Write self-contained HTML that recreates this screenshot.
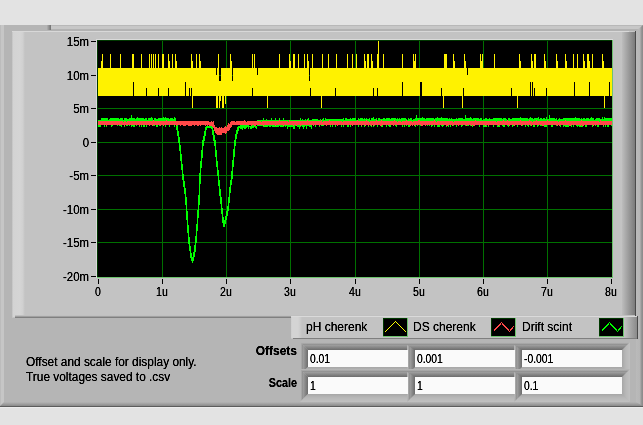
<!DOCTYPE html>
<html><head><meta charset="utf-8"><style>
html,body{margin:0;padding:0;}
body{width:643px;height:425px;overflow:hidden;background:#e3e3e3;position:relative;font-family:"Liberation Sans",sans-serif;font-size:12px;color:#000;}
.a{position:absolute;}
.t{position:absolute;white-space:nowrap;line-height:14px;filter:url(#th);}
.yl{left:29px;width:60px;text-align:right;}
.xl{top:285px;width:40px;text-align:center;}
</style></head><body>
<svg width="0" height="0" style="position:absolute"><filter id="th" x="-5%" y="-20%" width="110%" height="140%"><feComponentTransfer><feFuncA type="linear" slope="1.5"/></feComponentTransfer></filter></svg>
<div class="a" style="left:0px;top:25px;width:643px;height:382px;background:#b5b5b5;"></div>
<div class="a" style="left:51px;top:25px;width:592px;height:6px;background:linear-gradient(to bottom,#b8b8b8 0,#b8b8b8 1px,#c7c7c7 1px,#c7c7c7 4px,#b2b2b2 4px,#b2b2b2 6px);"></div>
<div class="a" style="left:47px;top:25px;width:4px;height:5px;background:linear-gradient(to right,#b0b0b0,#707070);"></div>
<div class="a" style="left:0px;top:25px;width:4px;height:381px;background:linear-gradient(to right,#bcbcbc 0,#bcbcbc 1px,#c6c6c6 1px,#c6c6c6 4px);"></div>
<div class="a" style="left:0px;top:402px;width:643px;height:4px;background:linear-gradient(to bottom,#b5b5b5,#8a8a8a);clip-path:polygon(4px 0,100% 0,100% 100%,0 100%)"></div>
<div class="a" style="left:0px;top:406px;width:643px;height:1px;background:#5c5c5c;"></div>
<div class="a" style="left:0px;top:407px;width:643px;height:1px;background:#ececec;"></div>
<div class="a" style="left:636px;top:25px;width:7px;height:381px;background:linear-gradient(to right,#bababa 0,#b6b6b6 4px,#9a9a9a 5px,#888 7px);clip-path:polygon(0 6px,100% 0,100% 100%,0 calc(100% - 4px))"></div>
<div class="a" style="left:12px;top:31px;width:624px;height:287px;background:#c3c3c3;"></div>
<div class="a" style="left:12px;top:31px;width:13px;height:286px;background:linear-gradient(to right,#bcbcbc 0,#d3d3d3 1px,#d5d5d5 8px,#d0d0d0 11px,#c8c8c8 12px,#c3c3c3 13px);"></div>
<div class="a" style="left:12px;top:31px;width:617px;height:1px;background:#d8d8d8;"></div>
<div class="a" style="left:629px;top:31px;width:4px;height:1px;background:#c8c8c8;"></div>
<div class="a" style="left:622px;top:32px;width:13px;height:285px;background:linear-gradient(to right,#bdbdbd,#7a7a7a);"></div>
<div class="a" style="left:635px;top:31px;width:1px;height:287px;background:#4a4a4a;"></div>
<div class="a" style="left:15px;top:315px;width:620px;height:1px;background:#c0c0c0;"></div>
<div class="a" style="left:15px;top:316px;width:620px;height:1px;background:#a0a0a0;"></div>
<div class="a" style="left:15px;top:317px;width:621px;height:1px;background:#7f7f7f;"></div>
<div class="a" style="left:96px;top:39px;width:517px;height:1px;background:#dadada;"></div>
<div class="a" style="left:96px;top:39px;width:1px;height:239px;background:#dadada;"></div>
<svg class="a" style="left:0;top:0" width="643" height="425" shape-rendering="crispEdges">
<rect x="97" y="40" width="516" height="238" fill="#6ec46e"/>
<rect x="97" y="40" width="515" height="237" fill="#003800"/>
<rect x="98" y="41" width="514" height="236" fill="#000"/>
<path d="M162 41h1v236h-1zM226 41h1v236h-1zM290 41h1v236h-1zM355 41h1v236h-1zM419 41h1v236h-1zM483 41h1v236h-1zM547 41h1v236h-1zM98 75h514v1h-514zM98 108h514v1h-514zM98 142h514v1h-514zM98 175h514v1h-514zM98 209h514v1h-514zM98 242h514v1h-514z" fill="#007000"/>
<path d="M98 68h1v28h-1zM99 68h1v28h-1zM100 68h1v28h-1zM101 61h1v35h-1zM102 54h1v42h-1zM103 68h1v28h-1zM104 68h1v28h-1zM105 68h1v28h-1zM106 68h1v28h-1zM107 68h1v28h-1zM108 68h1v28h-1zM109 68h1v28h-1zM110 54h1v42h-1zM111 68h1v28h-1zM112 68h1v28h-1zM113 68h1v28h-1zM114 68h1v28h-1zM115 68h1v28h-1zM116 68h1v28h-1zM117 68h1v28h-1zM118 68h1v28h-1zM119 68h1v28h-1zM120 54h1v42h-1zM121 68h1v28h-1zM122 68h1v28h-1zM123 68h1v28h-1zM124 68h1v28h-1zM125 68h1v28h-1zM126 68h1v28h-1zM127 68h1v28h-1zM128 68h1v28h-1zM129 68h1v28h-1zM130 68h1v28h-1zM131 68h1v28h-1zM132 54h1v42h-1zM133 54h1v28h-1zM134 68h1v28h-1zM135 68h1v28h-1zM136 68h1v28h-1zM137 68h1v28h-1zM138 68h1v28h-1zM139 68h1v28h-1zM140 68h1v28h-1zM141 54h1v42h-1zM142 68h1v28h-1zM143 68h1v28h-1zM144 68h1v28h-1zM145 68h1v28h-1zM146 68h1v20h-1zM147 68h1v28h-1zM148 68h1v28h-1zM149 54h1v42h-1zM150 68h1v28h-1zM151 54h1v42h-1zM152 68h1v28h-1zM153 54h1v42h-1zM154 68h1v28h-1zM155 54h1v42h-1zM156 68h1v28h-1zM157 68h1v28h-1zM158 54h1v34h-1zM159 68h1v28h-1zM160 68h1v28h-1zM161 68h1v28h-1zM162 54h1v42h-1zM163 54h1v42h-1zM164 68h1v28h-1zM165 68h1v28h-1zM166 68h1v28h-1zM167 68h1v28h-1zM168 54h1v34h-1zM169 61h1v35h-1zM170 68h1v28h-1zM171 68h1v28h-1zM172 54h1v42h-1zM173 68h1v28h-1zM174 68h1v28h-1zM175 54h1v42h-1zM176 61h1v35h-1zM177 68h1v28h-1zM178 68h1v28h-1zM179 68h1v28h-1zM180 68h1v28h-1zM181 68h1v28h-1zM182 68h1v28h-1zM183 68h1v28h-1zM184 68h1v28h-1zM185 68h1v14h-1zM186 68h1v28h-1zM187 68h1v28h-1zM188 68h1v28h-1zM189 68h1v20h-1zM190 68h1v28h-1zM191 54h1v34h-1zM192 61h1v47h-1zM193 68h1v28h-1zM194 68h1v28h-1zM195 68h1v28h-1zM196 54h1v42h-1zM197 68h1v28h-1zM198 68h1v28h-1zM199 54h1v42h-1zM200 61h1v35h-1zM201 68h1v28h-1zM202 68h1v28h-1zM203 68h1v28h-1zM204 68h1v28h-1zM205 68h1v28h-1zM206 68h1v28h-1zM207 68h1v28h-1zM208 68h1v28h-1zM209 68h1v28h-1zM210 68h1v28h-1zM211 68h1v28h-1zM212 68h1v28h-1zM213 68h1v28h-1zM214 68h1v28h-1zM215 68h1v28h-1zM216 75h1v33h-1zM217 68h1v40h-1zM218 54h1v42h-1zM219 81h1v27h-1zM220 81h1v20h-1zM221 68h1v28h-1zM222 68h1v40h-1zM223 68h1v40h-1zM224 68h1v28h-1zM225 68h1v36h-1zM226 68h1v28h-1zM227 68h1v28h-1zM228 68h1v28h-1zM229 68h1v28h-1zM230 54h1v42h-1zM231 61h1v35h-1zM232 81h1v15h-1zM233 68h1v28h-1zM234 68h1v28h-1zM235 68h1v28h-1zM236 68h1v28h-1zM237 68h1v28h-1zM238 68h1v28h-1zM239 68h1v28h-1zM240 68h1v28h-1zM241 68h1v28h-1zM242 68h1v28h-1zM243 68h1v28h-1zM244 68h1v28h-1zM245 68h1v28h-1zM246 68h1v28h-1zM247 68h1v28h-1zM248 68h1v28h-1zM249 68h1v28h-1zM250 68h1v28h-1zM251 68h1v28h-1zM252 54h1v34h-1zM253 68h1v28h-1zM254 54h1v42h-1zM255 68h1v28h-1zM256 68h1v28h-1zM257 75h1v21h-1zM258 68h1v28h-1zM259 68h1v28h-1zM260 68h1v28h-1zM261 68h1v28h-1zM262 68h1v28h-1zM263 68h1v28h-1zM264 68h1v28h-1zM265 68h1v28h-1zM266 68h1v28h-1zM267 68h1v40h-1zM268 68h1v28h-1zM269 68h1v28h-1zM270 68h1v28h-1zM271 68h1v28h-1zM272 68h1v28h-1zM273 68h1v28h-1zM274 68h1v28h-1zM275 68h1v28h-1zM276 68h1v28h-1zM277 68h1v28h-1zM278 68h1v28h-1zM279 54h1v42h-1zM280 68h1v28h-1zM281 68h1v28h-1zM282 68h1v28h-1zM283 68h1v28h-1zM284 68h1v28h-1zM285 68h1v28h-1zM286 68h1v28h-1zM287 68h1v28h-1zM288 68h1v28h-1zM289 54h1v42h-1zM290 61h1v35h-1zM291 68h1v28h-1zM292 68h1v28h-1zM293 54h1v42h-1zM294 54h1v42h-1zM295 68h1v28h-1zM296 68h1v28h-1zM297 68h1v28h-1zM298 54h1v42h-1zM299 68h1v28h-1zM300 68h1v28h-1zM301 68h1v28h-1zM302 68h1v28h-1zM303 68h1v28h-1zM304 54h1v42h-1zM305 68h1v28h-1zM306 68h1v28h-1zM307 54h1v42h-1zM308 61h1v35h-1zM309 81h1v15h-1zM310 68h1v20h-1zM311 68h1v28h-1zM312 54h1v42h-1zM313 68h1v28h-1zM314 68h1v28h-1zM315 68h1v28h-1zM316 68h1v28h-1zM317 68h1v28h-1zM318 68h1v28h-1zM319 68h1v28h-1zM320 68h1v28h-1zM321 68h1v40h-1zM322 54h1v42h-1zM323 68h1v28h-1zM324 68h1v28h-1zM325 68h1v28h-1zM326 68h1v28h-1zM327 68h1v28h-1zM328 54h1v42h-1zM329 68h1v28h-1zM330 68h1v28h-1zM331 68h1v28h-1zM332 68h1v28h-1zM333 68h1v28h-1zM334 68h1v28h-1zM335 68h1v20h-1zM336 54h1v42h-1zM337 68h1v28h-1zM338 68h1v28h-1zM339 68h1v28h-1zM340 68h1v28h-1zM341 68h1v28h-1zM342 68h1v28h-1zM343 68h1v28h-1zM344 68h1v28h-1zM345 68h1v28h-1zM346 68h1v28h-1zM347 54h1v42h-1zM348 68h1v28h-1zM349 68h1v28h-1zM350 68h1v28h-1zM351 68h1v28h-1zM352 54h1v42h-1zM353 68h1v28h-1zM354 68h1v28h-1zM355 68h1v28h-1zM356 54h1v42h-1zM357 68h1v28h-1zM358 68h1v28h-1zM359 68h1v28h-1zM360 68h1v28h-1zM361 68h1v28h-1zM362 68h1v28h-1zM363 68h1v28h-1zM364 54h1v42h-1zM365 61h1v35h-1zM366 68h1v28h-1zM367 54h1v42h-1zM368 54h1v42h-1zM369 68h1v28h-1zM370 68h1v28h-1zM371 54h1v42h-1zM372 61h1v35h-1zM373 68h1v20h-1zM374 68h1v28h-1zM375 68h1v28h-1zM376 68h1v28h-1zM377 54h1v34h-1zM378 41h1v55h-1zM379 68h1v28h-1zM380 68h1v28h-1zM381 68h1v28h-1zM382 68h1v28h-1zM383 54h1v42h-1zM384 68h1v28h-1zM385 68h1v28h-1zM386 68h1v28h-1zM387 68h1v28h-1zM388 68h1v28h-1zM389 68h1v28h-1zM390 68h1v28h-1zM391 68h1v28h-1zM392 68h1v28h-1zM393 68h1v28h-1zM394 68h1v28h-1zM395 68h1v28h-1zM396 68h1v28h-1zM397 68h1v28h-1zM398 68h1v28h-1zM399 68h1v28h-1zM400 68h1v28h-1zM401 68h1v28h-1zM402 54h1v28h-1zM403 68h1v28h-1zM404 68h1v28h-1zM405 68h1v28h-1zM406 68h1v28h-1zM407 68h1v28h-1zM408 68h1v28h-1zM409 68h1v28h-1zM410 68h1v28h-1zM411 68h1v28h-1zM412 68h1v28h-1zM413 54h1v42h-1zM414 61h1v35h-1zM415 54h1v42h-1zM416 68h1v28h-1zM417 68h1v28h-1zM418 68h1v28h-1zM419 68h1v28h-1zM420 68h1v14h-1zM421 68h1v14h-1zM422 68h1v28h-1zM423 68h1v28h-1zM424 68h1v28h-1zM425 68h1v28h-1zM426 68h1v28h-1zM427 68h1v28h-1zM428 68h1v28h-1zM429 68h1v28h-1zM430 68h1v28h-1zM431 68h1v28h-1zM432 68h1v28h-1zM433 68h1v28h-1zM434 68h1v28h-1zM435 68h1v28h-1zM436 68h1v28h-1zM437 68h1v28h-1zM438 68h1v28h-1zM439 68h1v28h-1zM440 68h1v28h-1zM441 68h1v20h-1zM442 68h1v28h-1zM443 68h1v40h-1zM444 54h1v42h-1zM445 54h1v42h-1zM446 54h1v42h-1zM447 68h1v28h-1zM448 68h1v28h-1zM449 68h1v28h-1zM450 68h1v28h-1zM451 68h1v28h-1zM452 68h1v28h-1zM453 54h1v42h-1zM454 61h1v35h-1zM455 68h1v28h-1zM456 68h1v28h-1zM457 68h1v28h-1zM458 68h1v28h-1zM459 68h1v28h-1zM460 68h1v28h-1zM461 68h1v28h-1zM462 68h1v40h-1zM463 68h1v20h-1zM464 54h1v42h-1zM465 61h1v35h-1zM466 68h1v28h-1zM467 75h1v21h-1zM468 68h1v28h-1zM469 68h1v28h-1zM470 68h1v28h-1zM471 68h1v28h-1zM472 68h1v28h-1zM473 68h1v28h-1zM474 68h1v28h-1zM475 68h1v28h-1zM476 68h1v28h-1zM477 68h1v28h-1zM478 68h1v28h-1zM479 68h1v28h-1zM480 54h1v42h-1zM481 61h1v35h-1zM482 54h1v42h-1zM483 68h1v28h-1zM484 68h1v28h-1zM485 68h1v28h-1zM486 68h1v28h-1zM487 68h1v28h-1zM488 68h1v28h-1zM489 68h1v28h-1zM490 68h1v28h-1zM491 68h1v28h-1zM492 68h1v28h-1zM493 68h1v28h-1zM494 54h1v42h-1zM495 68h1v28h-1zM496 68h1v28h-1zM497 68h1v28h-1zM498 68h1v28h-1zM499 68h1v28h-1zM500 68h1v28h-1zM501 68h1v28h-1zM502 68h1v28h-1zM503 68h1v28h-1zM504 68h1v28h-1zM505 68h1v28h-1zM506 68h1v28h-1zM507 68h1v28h-1zM508 68h1v28h-1zM509 68h1v28h-1zM510 68h1v28h-1zM511 68h1v20h-1zM512 68h1v28h-1zM513 68h1v28h-1zM514 68h1v28h-1zM515 68h1v28h-1zM516 68h1v28h-1zM517 68h1v40h-1zM518 68h1v28h-1zM519 54h1v42h-1zM520 61h1v35h-1zM521 68h1v28h-1zM522 68h1v28h-1zM523 68h1v28h-1zM524 68h1v28h-1zM525 68h1v28h-1zM526 68h1v28h-1zM527 68h1v28h-1zM528 68h1v28h-1zM529 68h1v28h-1zM530 68h1v14h-1zM531 54h1v42h-1zM532 61h1v21h-1zM533 68h1v28h-1zM534 54h1v34h-1zM535 54h1v42h-1zM536 68h1v28h-1zM537 68h1v28h-1zM538 68h1v28h-1zM539 68h1v28h-1zM540 68h1v28h-1zM541 68h1v28h-1zM542 68h1v28h-1zM543 68h1v28h-1zM544 54h1v42h-1zM545 61h1v35h-1zM546 68h1v20h-1zM547 68h1v28h-1zM548 68h1v28h-1zM549 68h1v28h-1zM550 68h1v28h-1zM551 68h1v28h-1zM552 68h1v28h-1zM553 68h1v28h-1zM554 68h1v28h-1zM555 68h1v28h-1zM556 54h1v42h-1zM557 61h1v35h-1zM558 68h1v28h-1zM559 68h1v28h-1zM560 68h1v28h-1zM561 68h1v28h-1zM562 68h1v28h-1zM563 68h1v28h-1zM564 68h1v28h-1zM565 54h1v42h-1zM566 61h1v35h-1zM567 68h1v28h-1zM568 68h1v28h-1zM569 68h1v28h-1zM570 68h1v28h-1zM571 68h1v28h-1zM572 68h1v28h-1zM573 54h1v42h-1zM574 68h1v14h-1zM575 68h1v28h-1zM576 68h1v28h-1zM577 54h1v42h-1zM578 68h1v28h-1zM579 68h1v28h-1zM580 68h1v28h-1zM581 68h1v28h-1zM582 68h1v28h-1zM583 54h1v42h-1zM584 61h1v35h-1zM585 68h1v28h-1zM586 68h1v28h-1zM587 54h1v42h-1zM588 54h1v42h-1zM589 61h1v21h-1zM590 68h1v28h-1zM591 68h1v28h-1zM592 54h1v42h-1zM593 68h1v28h-1zM594 68h1v28h-1zM595 68h1v28h-1zM596 68h1v28h-1zM597 68h1v28h-1zM598 68h1v28h-1zM599 68h1v28h-1zM600 68h1v28h-1zM601 68h1v28h-1zM602 54h1v42h-1zM603 61h1v35h-1zM604 68h1v40h-1zM605 68h1v28h-1zM606 68h1v28h-1zM607 68h1v28h-1zM608 68h1v28h-1zM609 68h1v14h-1zM610 68h1v28h-1zM611 68h1v28h-1z" fill="#fff200"/>
<path d="M98 120h1v7h-1zM99 120h1v7h-1zM100 120h1v7h-1zM101 118h1v7h-1zM102 118h1v7h-1zM103 118h1v7h-1zM104 118h1v9h-1zM105 118h1v7h-1zM106 118h1v9h-1zM107 118h1v7h-1zM108 120h1v5h-1zM109 119h1v6h-1zM110 118h1v7h-1zM111 118h1v9h-1zM112 118h1v8h-1zM113 118h1v7h-1zM114 118h1v7h-1zM115 118h1v7h-1zM116 118h1v7h-1zM117 118h1v8h-1zM118 118h1v7h-1zM119 119h1v7h-1zM120 118h1v8h-1zM121 118h1v9h-1zM122 118h1v7h-1zM123 120h1v5h-1zM124 118h1v9h-1zM125 118h1v7h-1zM126 118h1v8h-1zM127 119h1v7h-1zM128 119h1v6h-1zM129 118h1v8h-1zM130 118h1v7h-1zM131 115h1v12h-1zM132 118h1v8h-1zM133 118h1v9h-1zM134 118h1v9h-1zM135 119h1v6h-1zM136 118h1v8h-1zM137 117h1v8h-1zM138 118h1v7h-1zM139 118h1v9h-1zM140 118h1v7h-1zM141 118h1v9h-1zM142 118h1v7h-1zM143 118h1v9h-1zM144 119h1v8h-1zM145 118h1v7h-1zM146 118h1v9h-1zM147 120h1v5h-1zM148 118h1v7h-1zM149 118h1v7h-1zM150 118h1v7h-1zM151 117h1v8h-1zM152 118h1v8h-1zM153 120h1v6h-1zM154 118h1v8h-1zM155 118h1v7h-1zM156 119h1v8h-1zM157 119h1v8h-1zM158 118h1v7h-1zM159 118h1v8h-1zM160 118h1v7h-1zM161 118h1v7h-1zM162 118h1v7h-1zM163 117h1v8h-1zM164 118h1v7h-1zM165 117h1v10h-1zM166 118h1v7h-1zM167 118h1v7h-1zM168 118h1v7h-1zM169 119h1v8h-1zM170 118h1v7h-1zM171 118h1v7h-1zM172 118h1v7h-1zM173 119h1v6h-1zM174 117h1v10h-1zM175 118h1v7h-1zM176 122h1v8h-1zM177 125h1v11h-1zM178 131h1v12h-1zM179 137h1v14h-1zM180 145h1v16h-1zM181 154h1v16h-1zM182 164h1v16h-1zM183 174h1v13h-1zM184 181h1v13h-1zM185 188h1v17h-1zM186 197h1v23h-1zM187 211h1v22h-1zM188 225h1v19h-1zM189 237h1v14h-1zM190 246h1v12h-1zM191 253h1v8h-1zM192 257h1v6h-1zM193 252h1v9h-1zM194 245h1v12h-1zM195 236h1v16h-1zM196 224h1v19h-1zM197 210h1v21h-1zM198 195h1v23h-1zM199 173h1v32h-1zM200 161h1v23h-1zM201 150h1v18h-1zM202 140h1v18h-1zM203 136h1v10h-1zM204 131h1v10h-1zM205 127h1v9h-1zM206 126h1v4h-1zM207 126h1v2h-1zM208 126h1v2h-1zM209 126h1v2h-1zM210 126h1v2h-1zM211 126h1v3h-1zM212 126h1v9h-1zM213 130h1v11h-1zM214 135h1v11h-1zM215 140h1v17h-1zM216 150h1v17h-1zM217 161h1v15h-1zM218 170h1v16h-1zM219 180h1v16h-1zM220 189h1v15h-1zM221 197h1v17h-1zM222 208h1v15h-1zM223 217h1v10h-1zM224 220h1v7h-1zM225 216h1v8h-1zM226 211h1v9h-1zM227 206h1v10h-1zM228 197h1v14h-1zM229 187h1v16h-1zM230 180h1v13h-1zM231 171h1v14h-1zM232 160h1v19h-1zM233 149h1v18h-1zM234 140h1v17h-1zM235 134h1v12h-1zM236 130h1v9h-1zM237 127h1v7h-1zM238 126h1v5h-1zM239 126h1v2h-1zM240 124h1v5h-1zM241 124h1v5h-1zM242 125h1v5h-1zM243 125h1v3h-1zM244 124h1v5h-1zM245 125h1v4h-1zM246 125h1v3h-1zM247 125h1v2h-1zM248 124h1v5h-1zM249 126h1v1h-1zM250 126h1v3h-1zM251 126h1v3h-1zM252 125h1v3h-1zM253 125h1v3h-1zM254 125h1v2h-1zM255 125h1v3h-1zM256 126h1v3h-1zM257 120h1v6h-1zM258 120h1v6h-1zM259 120h1v6h-1zM260 120h1v6h-1zM261 120h1v6h-1zM262 120h1v6h-1zM263 118h1v9h-1zM264 120h1v7h-1zM265 120h1v7h-1zM266 119h1v8h-1zM267 120h1v7h-1zM268 120h1v6h-1zM269 120h1v7h-1zM270 120h1v7h-1zM271 118h1v8h-1zM272 120h1v7h-1zM273 120h1v7h-1zM274 120h1v7h-1zM275 118h1v9h-1zM276 120h1v7h-1zM277 120h1v7h-1zM278 120h1v7h-1zM279 118h1v8h-1zM280 120h1v7h-1zM281 120h1v7h-1zM282 120h1v7h-1zM283 118h1v9h-1zM284 120h1v6h-1zM285 120h1v7h-1zM286 120h1v6h-1zM287 120h1v9h-1zM288 120h1v7h-1zM289 120h1v7h-1zM290 120h1v7h-1zM291 120h1v7h-1zM292 120h1v7h-1zM293 120h1v9h-1zM294 120h1v9h-1zM295 120h1v6h-1zM296 120h1v6h-1zM297 120h1v7h-1zM298 120h1v7h-1zM299 120h1v9h-1zM300 118h1v9h-1zM301 120h1v6h-1zM302 119h1v8h-1zM303 120h1v9h-1zM304 120h1v7h-1zM305 119h1v7h-1zM306 120h1v9h-1zM307 119h1v7h-1zM308 118h1v8h-1zM309 120h1v7h-1zM310 120h1v7h-1zM311 120h1v9h-1zM312 119h1v6h-1zM313 119h1v6h-1zM314 119h1v6h-1zM315 119h1v8h-1zM316 119h1v6h-1zM317 119h1v6h-1zM318 120h1v5h-1zM319 120h1v7h-1zM320 119h1v6h-1zM321 120h1v6h-1zM322 119h1v7h-1zM323 118h1v8h-1zM324 120h1v5h-1zM325 118h1v7h-1zM326 119h1v7h-1zM327 119h1v6h-1zM328 119h1v6h-1zM329 119h1v6h-1zM330 119h1v8h-1zM331 119h1v6h-1zM332 119h1v8h-1zM333 119h1v6h-1zM334 119h1v6h-1zM335 119h1v8h-1zM336 119h1v6h-1zM337 119h1v6h-1zM338 119h1v6h-1zM339 119h1v6h-1zM340 119h1v6h-1zM341 119h1v8h-1zM342 119h1v6h-1zM343 118h1v9h-1zM344 120h1v5h-1zM345 118h1v7h-1zM346 118h1v7h-1zM347 119h1v8h-1zM348 119h1v8h-1zM349 119h1v6h-1zM350 118h1v9h-1zM351 119h1v6h-1zM352 118h1v7h-1zM353 118h1v7h-1zM354 118h1v7h-1zM355 118h1v7h-1zM356 120h1v5h-1zM357 120h1v5h-1zM358 118h1v9h-1zM359 119h1v6h-1zM360 118h1v7h-1zM361 118h1v9h-1zM362 118h1v7h-1zM363 119h1v6h-1zM364 118h1v9h-1zM365 119h1v6h-1zM366 118h1v7h-1zM367 119h1v6h-1zM368 119h1v8h-1zM369 118h1v7h-1zM370 120h1v6h-1zM371 118h1v9h-1zM372 118h1v7h-1zM373 117h1v10h-1zM374 119h1v7h-1zM375 119h1v6h-1zM376 118h1v7h-1zM377 120h1v7h-1zM378 118h1v7h-1zM379 118h1v7h-1zM380 119h1v6h-1zM381 119h1v8h-1zM382 119h1v8h-1zM383 118h1v7h-1zM384 118h1v7h-1zM385 119h1v6h-1zM386 118h1v9h-1zM387 118h1v7h-1zM388 118h1v8h-1zM389 118h1v9h-1zM390 119h1v8h-1zM391 118h1v7h-1zM392 118h1v7h-1zM393 118h1v7h-1zM394 118h1v7h-1zM395 118h1v8h-1zM396 119h1v8h-1zM397 118h1v7h-1zM398 119h1v6h-1zM399 118h1v7h-1zM400 119h1v6h-1zM401 118h1v7h-1zM402 118h1v9h-1zM403 118h1v7h-1zM404 118h1v9h-1zM405 118h1v7h-1zM406 119h1v7h-1zM407 120h1v5h-1zM408 118h1v9h-1zM409 119h1v8h-1zM410 118h1v7h-1zM411 118h1v7h-1zM412 120h1v6h-1zM413 119h1v6h-1zM414 119h1v6h-1zM415 118h1v9h-1zM416 115h1v10h-1zM417 118h1v8h-1zM418 118h1v7h-1zM419 118h1v7h-1zM420 118h1v8h-1zM421 118h1v7h-1zM422 117h1v8h-1zM423 118h1v7h-1zM424 118h1v7h-1zM425 119h1v6h-1zM426 118h1v7h-1zM427 118h1v8h-1zM428 118h1v7h-1zM429 118h1v8h-1zM430 118h1v7h-1zM431 118h1v9h-1zM432 118h1v8h-1zM433 118h1v7h-1zM434 119h1v8h-1zM435 118h1v7h-1zM436 118h1v7h-1zM437 117h1v10h-1zM438 118h1v9h-1zM439 118h1v9h-1zM440 118h1v7h-1zM441 117h1v9h-1zM442 118h1v9h-1zM443 118h1v8h-1zM444 118h1v7h-1zM445 118h1v7h-1zM446 118h1v9h-1zM447 118h1v7h-1zM448 119h1v8h-1zM449 118h1v7h-1zM450 119h1v8h-1zM451 118h1v7h-1zM452 119h1v6h-1zM453 119h1v7h-1zM454 119h1v6h-1zM455 119h1v6h-1zM456 118h1v9h-1zM457 119h1v6h-1zM458 118h1v7h-1zM459 118h1v7h-1zM460 118h1v7h-1zM461 118h1v9h-1zM462 118h1v8h-1zM463 119h1v6h-1zM464 119h1v6h-1zM465 115h1v11h-1zM466 118h1v7h-1zM467 118h1v8h-1zM468 118h1v8h-1zM469 118h1v7h-1zM470 117h1v9h-1zM471 118h1v7h-1zM472 119h1v8h-1zM473 118h1v7h-1zM474 118h1v7h-1zM475 118h1v7h-1zM476 118h1v7h-1zM477 118h1v7h-1zM478 118h1v7h-1zM479 119h1v8h-1zM480 118h1v7h-1zM481 118h1v7h-1zM482 120h1v5h-1zM483 119h1v8h-1zM484 119h1v8h-1zM485 118h1v9h-1zM486 118h1v9h-1zM487 119h1v6h-1zM488 119h1v8h-1zM489 118h1v7h-1zM490 119h1v6h-1zM491 119h1v6h-1zM492 119h1v6h-1zM493 118h1v9h-1zM494 118h1v7h-1zM495 118h1v7h-1zM496 118h1v7h-1zM497 118h1v9h-1zM498 118h1v9h-1zM499 118h1v9h-1zM500 118h1v7h-1zM501 118h1v7h-1zM502 119h1v7h-1zM503 118h1v9h-1zM504 118h1v9h-1zM505 118h1v7h-1zM506 119h1v6h-1zM507 120h1v6h-1zM508 118h1v9h-1zM509 118h1v7h-1zM510 119h1v6h-1zM511 119h1v6h-1zM512 118h1v9h-1zM513 118h1v8h-1zM514 118h1v7h-1zM515 118h1v7h-1zM516 118h1v7h-1zM517 118h1v9h-1zM518 118h1v7h-1zM519 118h1v7h-1zM520 117h1v8h-1zM521 118h1v7h-1zM522 118h1v8h-1zM523 118h1v7h-1zM524 118h1v7h-1zM525 118h1v9h-1zM526 118h1v7h-1zM527 118h1v8h-1zM528 119h1v8h-1zM529 118h1v7h-1zM530 117h1v9h-1zM531 118h1v7h-1zM532 118h1v7h-1zM533 119h1v8h-1zM534 118h1v9h-1zM535 118h1v7h-1zM536 118h1v7h-1zM537 118h1v9h-1zM538 117h1v9h-1zM539 119h1v6h-1zM540 118h1v8h-1zM541 118h1v8h-1zM542 119h1v6h-1zM543 118h1v7h-1zM544 118h1v9h-1zM545 119h1v8h-1zM546 117h1v10h-1zM547 119h1v6h-1zM548 119h1v6h-1zM549 115h1v10h-1zM550 118h1v7h-1zM551 118h1v9h-1zM552 118h1v9h-1zM553 118h1v7h-1zM554 118h1v7h-1zM555 119h1v6h-1zM556 118h1v8h-1zM557 120h1v5h-1zM558 119h1v6h-1zM559 118h1v7h-1zM560 119h1v8h-1zM561 119h1v6h-1zM562 119h1v6h-1zM563 118h1v9h-1zM564 118h1v8h-1zM565 118h1v9h-1zM566 118h1v9h-1zM567 118h1v9h-1zM568 118h1v9h-1zM569 118h1v7h-1zM570 118h1v8h-1zM571 118h1v9h-1zM572 118h1v7h-1zM573 118h1v9h-1zM574 118h1v7h-1zM575 117h1v8h-1zM576 118h1v8h-1zM577 118h1v9h-1zM578 118h1v8h-1zM579 118h1v9h-1zM580 119h1v8h-1zM581 118h1v9h-1zM582 119h1v8h-1zM583 118h1v7h-1zM584 118h1v7h-1zM585 119h1v8h-1zM586 118h1v9h-1zM587 118h1v7h-1zM588 118h1v7h-1zM589 119h1v6h-1zM590 118h1v7h-1zM591 117h1v8h-1zM592 118h1v9h-1zM593 118h1v7h-1zM594 120h1v5h-1zM595 119h1v7h-1zM596 118h1v7h-1zM597 118h1v9h-1zM598 118h1v9h-1zM599 118h1v7h-1zM600 119h1v6h-1zM601 119h1v6h-1zM602 117h1v8h-1zM603 119h1v8h-1zM604 117h1v8h-1zM605 118h1v9h-1zM606 118h1v7h-1zM607 118h1v9h-1zM608 118h1v9h-1zM609 118h1v7h-1zM610 118h1v7h-1zM611 118h1v8h-1z" fill="#00ff00"/>
<path d="M98 121h1v4h-1zM99 121h1v4h-1zM100 121h1v4h-1zM101 121h1v4h-1zM102 121h1v4h-1zM103 121h1v4h-1zM104 121h1v4h-1zM105 121h1v4h-1zM106 121h1v5h-1zM107 121h1v4h-1zM108 121h1v4h-1zM109 121h1v4h-1zM110 121h1v4h-1zM111 121h1v4h-1zM112 121h1v4h-1zM113 121h1v4h-1zM114 121h1v4h-1zM115 121h1v4h-1zM116 121h1v4h-1zM117 121h1v4h-1zM118 121h1v4h-1zM119 121h1v4h-1zM120 121h1v4h-1zM121 121h1v4h-1zM122 121h1v4h-1zM123 122h1v3h-1zM124 121h1v5h-1zM125 121h1v4h-1zM126 122h1v3h-1zM127 121h1v4h-1zM128 121h1v4h-1zM129 121h1v4h-1zM130 121h1v4h-1zM131 121h1v4h-1zM132 121h1v4h-1zM133 121h1v4h-1zM134 121h1v4h-1zM135 121h1v4h-1zM136 121h1v4h-1zM137 121h1v4h-1zM138 121h1v4h-1zM139 121h1v5h-1zM140 121h1v4h-1zM141 121h1v4h-1zM142 121h1v4h-1zM143 121h1v4h-1zM144 121h1v4h-1zM145 121h1v4h-1zM146 121h1v4h-1zM147 121h1v4h-1zM148 121h1v4h-1zM149 121h1v5h-1zM150 121h1v4h-1zM151 121h1v4h-1zM152 121h1v5h-1zM153 120h1v5h-1zM154 121h1v4h-1zM155 121h1v4h-1zM156 121h1v4h-1zM157 121h1v4h-1zM158 121h1v4h-1zM159 121h1v4h-1zM160 121h1v5h-1zM161 121h1v4h-1zM162 121h1v4h-1zM163 121h1v5h-1zM164 121h1v4h-1zM165 121h1v4h-1zM166 120h1v5h-1zM167 121h1v4h-1zM168 121h1v4h-1zM169 121h1v4h-1zM170 121h1v4h-1zM171 121h1v4h-1zM172 121h1v4h-1zM173 121h1v4h-1zM174 121h1v4h-1zM175 121h1v4h-1zM176 121h1v5h-1zM177 121h1v4h-1zM178 121h1v4h-1zM179 121h1v4h-1zM180 121h1v5h-1zM181 121h1v4h-1zM182 121h1v4h-1zM183 121h1v5h-1zM184 121h1v5h-1zM185 121h1v5h-1zM186 121h1v4h-1zM187 121h1v4h-1zM188 121h1v5h-1zM189 121h1v5h-1zM190 121h1v5h-1zM191 121h1v5h-1zM192 121h1v4h-1zM193 121h1v4h-1zM194 121h1v5h-1zM195 121h1v4h-1zM196 121h1v4h-1zM197 121h1v5h-1zM198 121h1v5h-1zM199 121h1v4h-1zM200 121h1v5h-1zM201 121h1v4h-1zM202 121h1v4h-1zM203 121h1v4h-1zM204 121h1v4h-1zM205 121h1v5h-1zM206 121h1v4h-1zM207 121h1v5h-1zM208 121h1v4h-1zM209 122h1v4h-1zM210 122h1v4h-1zM211 121h1v5h-1zM212 122h1v5h-1zM213 121h1v7h-1zM214 125h1v6h-1zM215 127h1v6h-1zM216 127h1v7h-1zM217 128h1v7h-1zM218 128h1v7h-1zM219 127h1v8h-1zM220 128h1v7h-1zM221 127h1v8h-1zM222 128h1v5h-1zM223 128h1v5h-1zM224 127h1v6h-1zM225 126h1v8h-1zM226 127h1v6h-1zM227 125h1v6h-1zM228 123h1v8h-1zM229 124h1v6h-1zM230 122h1v6h-1zM231 121h1v6h-1zM232 121h1v4h-1zM233 121h1v4h-1zM234 121h1v4h-1zM235 122h1v3h-1zM236 121h1v4h-1zM237 121h1v4h-1zM238 121h1v4h-1zM239 121h1v4h-1zM240 121h1v4h-1zM241 121h1v4h-1zM242 121h1v4h-1zM243 121h1v4h-1zM244 120h1v5h-1zM245 121h1v4h-1zM246 122h1v3h-1zM247 121h1v4h-1zM248 121h1v4h-1zM249 121h1v4h-1zM250 121h1v4h-1zM251 121h1v5h-1zM252 121h1v4h-1zM253 121h1v4h-1zM254 121h1v5h-1zM255 121h1v5h-1zM256 121h1v4h-1zM257 121h1v4h-1zM258 121h1v4h-1zM259 121h1v4h-1zM260 121h1v4h-1zM261 122h1v3h-1zM262 121h1v4h-1zM263 121h1v5h-1zM264 121h1v4h-1zM265 121h1v4h-1zM266 121h1v4h-1zM267 121h1v4h-1zM268 121h1v4h-1zM269 121h1v4h-1zM270 121h1v4h-1zM271 121h1v4h-1zM272 121h1v4h-1zM273 121h1v4h-1zM274 121h1v4h-1zM275 121h1v5h-1zM276 121h1v4h-1zM277 121h1v4h-1zM278 121h1v4h-1zM279 120h1v5h-1zM280 121h1v4h-1zM281 121h1v4h-1zM282 121h1v4h-1zM283 121h1v5h-1zM284 121h1v4h-1zM285 121h1v4h-1zM286 121h1v4h-1zM287 121h1v4h-1zM288 122h1v3h-1zM289 120h1v5h-1zM290 121h1v4h-1zM291 121h1v4h-1zM292 121h1v4h-1zM293 121h1v5h-1zM294 121h1v4h-1zM295 121h1v4h-1zM296 121h1v5h-1zM297 121h1v4h-1zM298 121h1v4h-1zM299 121h1v4h-1zM300 121h1v5h-1zM301 121h1v4h-1zM302 121h1v4h-1zM303 121h1v4h-1zM304 121h1v4h-1zM305 121h1v4h-1zM306 121h1v4h-1zM307 120h1v5h-1zM308 121h1v4h-1zM309 121h1v4h-1zM310 121h1v4h-1zM311 121h1v4h-1zM312 121h1v4h-1zM313 121h1v5h-1zM314 121h1v4h-1zM315 121h1v4h-1zM316 121h1v4h-1zM317 121h1v4h-1zM318 121h1v4h-1zM319 121h1v5h-1zM320 121h1v4h-1zM321 120h1v5h-1zM322 122h1v3h-1zM323 121h1v4h-1zM324 121h1v4h-1zM325 121h1v4h-1zM326 121h1v5h-1zM327 121h1v4h-1zM328 121h1v4h-1zM329 120h1v5h-1zM330 121h1v4h-1zM331 121h1v4h-1zM332 121h1v4h-1zM333 121h1v4h-1zM334 121h1v4h-1zM335 121h1v4h-1zM336 121h1v4h-1zM337 121h1v5h-1zM338 121h1v4h-1zM339 121h1v4h-1zM340 121h1v4h-1zM341 121h1v4h-1zM342 122h1v3h-1zM343 121h1v4h-1zM344 121h1v4h-1zM345 121h1v4h-1zM346 121h1v4h-1zM347 121h1v4h-1zM348 121h1v4h-1zM349 121h1v4h-1zM350 121h1v4h-1zM351 121h1v4h-1zM352 121h1v5h-1zM353 121h1v4h-1zM354 121h1v4h-1zM355 121h1v4h-1zM356 121h1v4h-1zM357 120h1v5h-1zM358 121h1v4h-1zM359 121h1v4h-1zM360 121h1v4h-1zM361 121h1v5h-1zM362 121h1v4h-1zM363 121h1v4h-1zM364 121h1v4h-1zM365 121h1v5h-1zM366 120h1v5h-1zM367 121h1v4h-1zM368 121h1v5h-1zM369 122h1v3h-1zM370 121h1v4h-1zM371 121h1v5h-1zM372 121h1v4h-1zM373 121h1v5h-1zM374 121h1v4h-1zM375 121h1v4h-1zM376 120h1v5h-1zM377 121h1v4h-1zM378 121h1v4h-1zM379 121h1v4h-1zM380 121h1v5h-1zM381 120h1v6h-1zM382 121h1v4h-1zM383 121h1v4h-1zM384 121h1v4h-1zM385 121h1v4h-1zM386 121h1v4h-1zM387 121h1v4h-1zM388 121h1v4h-1zM389 121h1v4h-1zM390 121h1v4h-1zM391 121h1v4h-1zM392 121h1v4h-1zM393 121h1v5h-1zM394 120h1v5h-1zM395 121h1v4h-1zM396 121h1v4h-1zM397 122h1v3h-1zM398 121h1v4h-1zM399 121h1v4h-1zM400 121h1v4h-1zM401 122h1v3h-1zM402 121h1v4h-1zM403 121h1v4h-1zM404 121h1v4h-1zM405 121h1v4h-1zM406 120h1v5h-1zM407 121h1v4h-1zM408 121h1v4h-1zM409 121h1v4h-1zM410 121h1v5h-1zM411 121h1v4h-1zM412 122h1v4h-1zM413 121h1v4h-1zM414 121h1v5h-1zM415 121h1v4h-1zM416 121h1v4h-1zM417 121h1v4h-1zM418 120h1v5h-1zM419 120h1v5h-1zM420 121h1v4h-1zM421 121h1v5h-1zM422 121h1v5h-1zM423 121h1v4h-1zM424 121h1v4h-1zM425 121h1v5h-1zM426 121h1v4h-1zM427 121h1v4h-1zM428 121h1v4h-1zM429 121h1v4h-1zM430 121h1v4h-1zM431 121h1v4h-1zM432 121h1v4h-1zM433 121h1v4h-1zM434 120h1v5h-1zM435 121h1v4h-1zM436 122h1v3h-1zM437 121h1v4h-1zM438 121h1v4h-1zM439 121h1v4h-1zM440 121h1v4h-1zM441 121h1v4h-1zM442 121h1v4h-1zM443 121h1v4h-1zM444 121h1v4h-1zM445 121h1v4h-1zM446 121h1v5h-1zM447 121h1v5h-1zM448 121h1v4h-1zM449 121h1v4h-1zM450 121h1v4h-1zM451 121h1v4h-1zM452 121h1v5h-1zM453 122h1v3h-1zM454 121h1v4h-1zM455 121h1v4h-1zM456 121h1v4h-1zM457 121h1v4h-1zM458 121h1v5h-1zM459 121h1v4h-1zM460 121h1v4h-1zM461 121h1v4h-1zM462 121h1v4h-1zM463 121h1v4h-1zM464 121h1v4h-1zM465 121h1v4h-1zM466 121h1v5h-1zM467 121h1v4h-1zM468 121h1v4h-1zM469 121h1v4h-1zM470 121h1v4h-1zM471 121h1v5h-1zM472 121h1v4h-1zM473 121h1v5h-1zM474 121h1v5h-1zM475 120h1v5h-1zM476 121h1v4h-1zM477 121h1v4h-1zM478 121h1v4h-1zM479 121h1v4h-1zM480 121h1v4h-1zM481 121h1v4h-1zM482 121h1v4h-1zM483 121h1v4h-1zM484 121h1v4h-1zM485 121h1v5h-1zM486 121h1v4h-1zM487 121h1v4h-1zM488 121h1v5h-1zM489 121h1v4h-1zM490 121h1v4h-1zM491 121h1v4h-1zM492 121h1v4h-1zM493 121h1v4h-1zM494 121h1v4h-1zM495 121h1v4h-1zM496 122h1v3h-1zM497 121h1v4h-1zM498 121h1v5h-1zM499 121h1v4h-1zM500 121h1v4h-1zM501 121h1v4h-1zM502 121h1v4h-1zM503 120h1v5h-1zM504 121h1v4h-1zM505 121h1v4h-1zM506 121h1v4h-1zM507 120h1v5h-1zM508 121h1v4h-1zM509 121h1v5h-1zM510 121h1v4h-1zM511 121h1v4h-1zM512 121h1v4h-1zM513 121h1v4h-1zM514 121h1v5h-1zM515 121h1v4h-1zM516 121h1v4h-1zM517 121h1v4h-1zM518 121h1v4h-1zM519 121h1v4h-1zM520 120h1v5h-1zM521 121h1v5h-1zM522 121h1v4h-1zM523 121h1v4h-1zM524 121h1v4h-1zM525 121h1v4h-1zM526 121h1v4h-1zM527 121h1v4h-1zM528 121h1v4h-1zM529 120h1v5h-1zM530 121h1v4h-1zM531 121h1v5h-1zM532 122h1v3h-1zM533 121h1v4h-1zM534 121h1v4h-1zM535 121h1v4h-1zM536 120h1v5h-1zM537 121h1v4h-1zM538 121h1v4h-1zM539 121h1v4h-1zM540 121h1v4h-1zM541 121h1v4h-1zM542 121h1v5h-1zM543 121h1v5h-1zM544 121h1v4h-1zM545 121h1v4h-1zM546 121h1v4h-1zM547 120h1v5h-1zM548 121h1v4h-1zM549 121h1v4h-1zM550 121h1v4h-1zM551 121h1v4h-1zM552 121h1v4h-1zM553 121h1v4h-1zM554 121h1v4h-1zM555 121h1v4h-1zM556 121h1v4h-1zM557 121h1v5h-1zM558 122h1v3h-1zM559 121h1v5h-1zM560 121h1v4h-1zM561 121h1v4h-1zM562 121h1v4h-1zM563 121h1v4h-1zM564 121h1v4h-1zM565 120h1v5h-1zM566 121h1v4h-1zM567 121h1v4h-1zM568 121h1v4h-1zM569 121h1v5h-1zM570 121h1v5h-1zM571 121h1v4h-1zM572 121h1v4h-1zM573 121h1v4h-1zM574 121h1v4h-1zM575 121h1v4h-1zM576 121h1v4h-1zM577 121h1v4h-1zM578 121h1v4h-1zM579 121h1v4h-1zM580 121h1v5h-1zM581 120h1v5h-1zM582 121h1v5h-1zM583 121h1v5h-1zM584 121h1v4h-1zM585 121h1v4h-1zM586 121h1v4h-1zM587 121h1v4h-1zM588 121h1v4h-1zM589 121h1v4h-1zM590 121h1v4h-1zM591 121h1v4h-1zM592 121h1v4h-1zM593 121h1v5h-1zM594 121h1v4h-1zM595 121h1v4h-1zM596 121h1v4h-1zM597 121h1v4h-1zM598 121h1v4h-1zM599 122h1v3h-1zM600 120h1v5h-1zM601 121h1v4h-1zM602 121h1v4h-1zM603 121h1v5h-1zM604 121h1v4h-1zM605 121h1v4h-1zM606 121h1v4h-1zM607 121h1v4h-1zM608 121h1v4h-1zM609 121h1v4h-1zM610 121h1v4h-1zM611 121h1v4h-1z" fill="#ff4848"/>
<path d="M91 41h5v1h-5zM91 75h5v1h-5zM91 108h5v1h-5zM91 142h5v1h-5zM91 175h5v1h-5zM91 209h5v1h-5zM91 242h5v1h-5zM91 276h5v1h-5zM98 279h1v5h-1zM162 279h1v5h-1zM226 279h1v5h-1zM290 279h1v5h-1zM355 279h1v5h-1zM419 279h1v5h-1zM483 279h1v5h-1zM547 279h1v5h-1zM611 279h1v5h-1z" fill="#000"/>
</svg>
<div class="t yl" style="top:35px;transform:scaleX(0.95);transform-origin:100% 0">15m</div>
<div class="t yl" style="top:69px;transform:scaleX(0.95);transform-origin:100% 0">10m</div>
<div class="t yl" style="top:102px;transform:scaleX(0.95);transform-origin:100% 0">5m</div>
<div class="t yl" style="top:136px;transform:scaleX(0.95);transform-origin:100% 0">0</div>
<div class="t yl" style="top:169px;transform:scaleX(0.95);transform-origin:100% 0">-5m</div>
<div class="t yl" style="top:203px;transform:scaleX(0.95);transform-origin:100% 0">-10m</div>
<div class="t yl" style="top:236px;transform:scaleX(0.95);transform-origin:100% 0">-15m</div>
<div class="t yl" style="top:270px;transform:scaleX(0.95);transform-origin:100% 0">-20m</div>
<div class="t xl" style="left:78px;transform:scaleX(0.88)">0</div>
<div class="t xl" style="left:142px;transform:scaleX(0.88)">1u</div>
<div class="t xl" style="left:206px;transform:scaleX(0.88)">2u</div>
<div class="t xl" style="left:270px;transform:scaleX(0.88)">3u</div>
<div class="t xl" style="left:335px;transform:scaleX(0.88)">4u</div>
<div class="t xl" style="left:399px;transform:scaleX(0.88)">5u</div>
<div class="t xl" style="left:463px;transform:scaleX(0.88)">6u</div>
<div class="t xl" style="left:527px;transform:scaleX(0.88)">7u</div>
<div class="t xl" style="left:591px;transform:scaleX(0.88)">8u</div>
<div class="a" style="left:291px;top:316px;width:347px;height:23px;background:#c3c3c3;"></div>
<div class="a" style="left:291px;top:316px;width:11px;height:22px;background:linear-gradient(to right,#cbcbcb 0,#d4d4d4 1px,#d4d4d4 7px,#c9c9c9 10px,#c3c3c3 11px);"></div>
<div class="a" style="left:291px;top:316px;width:347px;height:1px;background:#dadada;"></div>
<div class="a" style="left:293px;top:338px;width:345px;height:1px;background:#7f7f7f;"></div>
<div class="a" style="left:624px;top:317px;width:13px;height:21px;background:linear-gradient(to right,#c3c3c3,#8a8a8a);"></div>
<div class="a" style="left:637px;top:316px;width:1px;height:23px;background:#4a4a4a;"></div>
<div class="t" style="left:306px;top:320px;">pH cherenk</div>
<div class="t" style="left:413px;top:320px;">DS cherenk</div>
<div class="t" style="left:522px;top:320px;">Drift scint</div>
<svg class="a" style="left:0;top:0" width="643" height="425" shape-rendering="crispEdges">
<rect x="383" y="318" width="25" height="19" fill="#6ec46e"/><rect x="383" y="318" width="24" height="18" fill="#003800"/><rect x="384" y="319" width="23" height="17" fill="#000"/>
<rect x="491" y="318" width="25" height="19" fill="#6ec46e"/><rect x="491" y="318" width="24" height="18" fill="#003800"/><rect x="492" y="319" width="23" height="17" fill="#000"/>
<rect x="599" y="318" width="25" height="19" fill="#6ec46e"/><rect x="599" y="318" width="24" height="18" fill="#003800"/><rect x="600" y="319" width="23" height="17" fill="#000"/>
</svg>
<svg class="a" style="left:0;top:0" width="643" height="425" shape-rendering="crispEdges">
<polyline points="384.5,332.5 395.5,321.5 406.5,332.5" fill="none" stroke="#ffff00" stroke-width="1"/>
<polyline points="493.5,331.5 501.5,322.5 509.5,331.5 513.5,326.5" fill="none" stroke="#ff4848" stroke-width="1.2"/>
<polyline points="601.5,331.5 609.5,322.5 617.5,331.5 621.5,326.5" fill="none" stroke="#00ff00" stroke-width="1.2"/>
</svg>
<div class="t" style="left:26px;top:355px;line-height:15px;transform:scaleX(0.99);transform-origin:0 0;">Offset and scale for display only.<br>True voltages saved to .csv</div>
<div class="t" style="left:200px;top:344px;width:97px;text-align:right;font-weight:bold;">Offsets</div>
<div class="t" style="left:200px;top:376px;width:97px;text-align:right;font-weight:bold;transform:scaleX(0.9);transform-origin:100% 0;">Scale</div>
<div class="a" style="left:408px;top:342px;width:8px;height:33px;background:linear-gradient(to right,#a6a6a6 0,#b0b0b0 2px,#b8b8b8 4px,#c0c0c0 8px);"></div>
<div class="a" style="left:515px;top:342px;width:8px;height:33px;background:linear-gradient(to right,#a6a6a6 0,#b0b0b0 2px,#b8b8b8 4px,#c0c0c0 8px);"></div>
<div class="a" style="left:622px;top:342px;width:8px;height:33px;background:linear-gradient(to right,#a6a6a6 0,#b0b0b0 2px,#b8b8b8 4px,#c0c0c0 8px);clip-path:polygon(0 8px,100% 0,100% 100%,0 calc(100% - 8px))"></div>
<div class="a" style="left:300px;top:342px;width:8px;height:33px;background:linear-gradient(to right,#b8b8b8 0,#b0b0b0 1px,#8a8a8a 3px,#a0a0a0 3px,#959595 4px,#6c6c6c 8px);clip-path:polygon(0 0,100% 8px,100% calc(100% - 8px),0 100%)"></div>
<div class="a" style="left:407px;top:342px;width:8px;height:33px;background:linear-gradient(to right,#b8b8b8 0,#b0b0b0 1px,#8a8a8a 3px,#a0a0a0 3px,#959595 4px,#6c6c6c 8px);clip-path:polygon(0 3px,100% 8px,100% 100%,0 100%)"></div>
<div class="a" style="left:514px;top:342px;width:8px;height:33px;background:linear-gradient(to right,#b8b8b8 0,#b0b0b0 1px,#8a8a8a 3px,#a0a0a0 3px,#959595 4px,#6c6c6c 8px);clip-path:polygon(0 3px,100% 8px,100% 100%,0 100%)"></div>
<div class="a" style="left:300px;top:367px;width:330px;height:8px;background:linear-gradient(to bottom,#a6a6a6 0,#b0b0b0 2px,#b8b8b8 4px,#c0c0c0 8px);clip-path:polygon(8px 0,calc(100% - 8px) 0,100% 100%,0 100%)"></div>
<div class="a" style="left:407px;top:367px;width:8px;height:8px;background:linear-gradient(to right,#b8b8b8 0,#b0b0b0 1px,#8a8a8a 3px,#a0a0a0 3px,#959595 4px,#6c6c6c 8px);clip-path:polygon(0 0,100% 0,0 100%)"></div>
<div class="a" style="left:514px;top:367px;width:8px;height:8px;background:linear-gradient(to right,#b8b8b8 0,#b0b0b0 1px,#8a8a8a 3px,#a0a0a0 3px,#959595 4px,#6c6c6c 8px);clip-path:polygon(0 0,100% 0,0 100%)"></div>
<div class="a" style="left:300px;top:342px;width:330px;height:8px;background:linear-gradient(to bottom,#b8b8b8 0,#b0b0b0 1px,#8a8a8a 3px,#a0a0a0 3px,#959595 4px,#6c6c6c 8px);clip-path:polygon(0 0,100% 0,calc(100% - 8px) 100%,8px 100%)"></div>
<div class="a" style="left:407px;top:345px;width:8px;height:5px;background:linear-gradient(to right,#b8b8b8 0,#b0b0b0 1px,#8a8a8a 3px,#a0a0a0 3px,#959595 4px,#6c6c6c 8px);clip-path:polygon(0 0,0 100%,100% 100%)"></div>
<div class="a" style="left:514px;top:345px;width:8px;height:5px;background:linear-gradient(to right,#b8b8b8 0,#b0b0b0 1px,#8a8a8a 3px,#a0a0a0 3px,#959595 4px,#6c6c6c 8px);clip-path:polygon(0 0,0 100%,100% 100%)"></div>
<div class="a" style="left:308px;top:350px;width:100px;height:17px;background:#fafafa;"></div>
<div class="t" style="left:310px;top:352px;transform:scaleX(0.86);transform-origin:0 0;">0.01</div>
<div class="a" style="left:415px;top:350px;width:100px;height:17px;background:#fafafa;"></div>
<div class="t" style="left:417px;top:352px;transform:scaleX(0.86);transform-origin:0 0;">0.001</div>
<div class="a" style="left:522px;top:350px;width:100px;height:17px;background:#fafafa;"></div>
<div class="t" style="left:524px;top:352px;transform:scaleX(0.86);transform-origin:0 0;">-0.001</div>
<div class="a" style="left:408px;top:369px;width:8px;height:33px;background:linear-gradient(to right,#a6a6a6 0,#b0b0b0 2px,#b8b8b8 4px,#c0c0c0 8px);"></div>
<div class="a" style="left:515px;top:369px;width:8px;height:33px;background:linear-gradient(to right,#a6a6a6 0,#b0b0b0 2px,#b8b8b8 4px,#c0c0c0 8px);"></div>
<div class="a" style="left:622px;top:369px;width:8px;height:33px;background:linear-gradient(to right,#a6a6a6 0,#b0b0b0 2px,#b8b8b8 4px,#c0c0c0 8px);clip-path:polygon(0 8px,100% 0,100% 100%,0 calc(100% - 8px))"></div>
<div class="a" style="left:300px;top:369px;width:8px;height:33px;background:linear-gradient(to right,#b8b8b8 0,#b0b0b0 1px,#8a8a8a 3px,#a0a0a0 3px,#959595 4px,#6c6c6c 8px);clip-path:polygon(0 0,100% 8px,100% calc(100% - 8px),0 100%)"></div>
<div class="a" style="left:407px;top:369px;width:8px;height:33px;background:linear-gradient(to right,#b8b8b8 0,#b0b0b0 1px,#8a8a8a 3px,#a0a0a0 3px,#959595 4px,#6c6c6c 8px);clip-path:polygon(0 3px,100% 8px,100% 100%,0 100%)"></div>
<div class="a" style="left:514px;top:369px;width:8px;height:33px;background:linear-gradient(to right,#b8b8b8 0,#b0b0b0 1px,#8a8a8a 3px,#a0a0a0 3px,#959595 4px,#6c6c6c 8px);clip-path:polygon(0 3px,100% 8px,100% 100%,0 100%)"></div>
<div class="a" style="left:300px;top:394px;width:330px;height:8px;background:linear-gradient(to bottom,#a6a6a6 0,#b0b0b0 2px,#b8b8b8 4px,#c0c0c0 8px);clip-path:polygon(8px 0,calc(100% - 8px) 0,100% 100%,0 100%)"></div>
<div class="a" style="left:407px;top:394px;width:8px;height:8px;background:linear-gradient(to right,#b8b8b8 0,#b0b0b0 1px,#8a8a8a 3px,#a0a0a0 3px,#959595 4px,#6c6c6c 8px);clip-path:polygon(0 0,100% 0,0 100%)"></div>
<div class="a" style="left:514px;top:394px;width:8px;height:8px;background:linear-gradient(to right,#b8b8b8 0,#b0b0b0 1px,#8a8a8a 3px,#a0a0a0 3px,#959595 4px,#6c6c6c 8px);clip-path:polygon(0 0,100% 0,0 100%)"></div>
<div class="a" style="left:300px;top:369px;width:330px;height:8px;background:linear-gradient(to bottom,#b8b8b8 0,#b0b0b0 1px,#8a8a8a 3px,#a0a0a0 3px,#959595 4px,#6c6c6c 8px);clip-path:polygon(0 0,100% 0,calc(100% - 8px) 100%,8px 100%)"></div>
<div class="a" style="left:407px;top:372px;width:8px;height:5px;background:linear-gradient(to right,#b8b8b8 0,#b0b0b0 1px,#8a8a8a 3px,#a0a0a0 3px,#959595 4px,#6c6c6c 8px);clip-path:polygon(0 0,0 100%,100% 100%)"></div>
<div class="a" style="left:514px;top:372px;width:8px;height:5px;background:linear-gradient(to right,#b8b8b8 0,#b0b0b0 1px,#8a8a8a 3px,#a0a0a0 3px,#959595 4px,#6c6c6c 8px);clip-path:polygon(0 0,0 100%,100% 100%)"></div>
<div class="a" style="left:308px;top:377px;width:100px;height:17px;background:#fafafa;"></div>
<div class="t" style="left:310px;top:379px;transform:scaleX(0.86);transform-origin:0 0;">1</div>
<div class="a" style="left:415px;top:377px;width:100px;height:17px;background:#fafafa;"></div>
<div class="t" style="left:417px;top:379px;transform:scaleX(0.86);transform-origin:0 0;">1</div>
<div class="a" style="left:522px;top:377px;width:100px;height:17px;background:#fafafa;"></div>
<div class="t" style="left:524px;top:379px;transform:scaleX(0.86);transform-origin:0 0;">0.1</div>
</body></html>
